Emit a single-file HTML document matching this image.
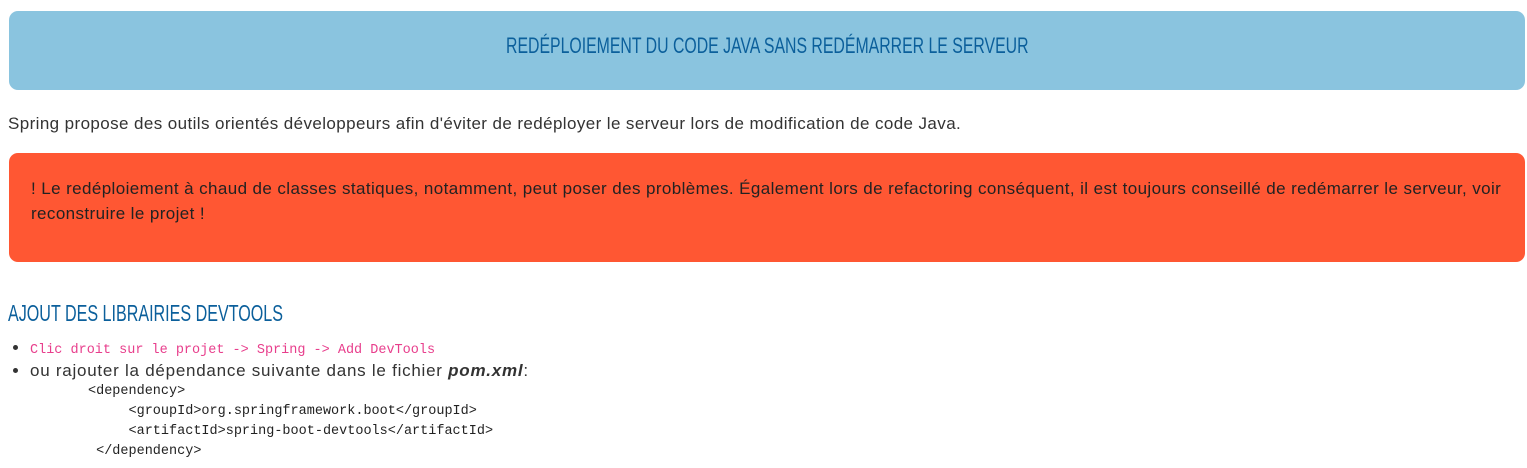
<!DOCTYPE html>
<html><head><meta charset="utf-8"><style>
body{margin:0;background:#fff;font-family:"Liberation Sans",Arial,sans-serif;color:#333;width:1527px;height:468px;overflow:hidden;position:relative}
.hdr{position:absolute;left:9px;top:11px;width:1516px;height:79px;background:#8ac4df;border-radius:9px}
.t{position:absolute;white-space:nowrap;color:#0b5f9b;transform-origin:0 0}
.p{position:absolute;left:8px;top:114px;font-size:17px;letter-spacing:0.4px;white-space:nowrap}
.warn{position:absolute;left:9px;top:153px;width:1516px;height:109px;background:#ff5733;border-radius:9px}
.warn div{position:absolute;left:22px;top:23px;right:20px;font-size:17px;letter-spacing:0.4px;line-height:25px;color:#222}
ul{position:absolute;left:8px;top:337px;margin:0;padding-left:22px;font-size:17px;letter-spacing:0.75px}
li{line-height:22px}
li.b{margin-top:-2px}
code{font-family:"Liberation Mono",monospace;font-size:13.5px;letter-spacing:0;color:#e83e8c}
pre{position:absolute;margin:0;font-family:"Liberation Mono",monospace;font-size:13.5px;line-height:20px;color:#222;left:88px;top:382px}
</style></head><body>
<div class="hdr"></div>
<div class="t" style="left:506px;top:33px;font-size:22px;transform:scaleX(0.72)">REDÉPLOIEMENT DU CODE JAVA SANS REDÉMARRER LE SERVEUR</div>
<div class="p">Spring propose des outils orientés développeurs afin d'éviter de redéployer le serveur lors de modification de code Java.</div>
<div class="warn"><div>! Le redéploiement à chaud de classes statiques, notamment, peut poser des problèmes. Également lors de refactoring conséquent, il est toujours conseillé de redémarrer le serveur, voir reconstruire le projet !</div></div>
<div class="t" style="left:8px;top:300px;font-size:23px;transform:scaleX(0.70)">AJOUT DES LIBRAIRIES DEVTOOLS</div>
<ul><li><code>Clic droit sur le projet -&gt; Spring -&gt; Add DevTools</code></li>
<li class="b">ou rajouter la dépendance suivante dans le fichier <b><i>pom.xml</i></b>:</li></ul>
<pre>&lt;dependency&gt;
     &lt;groupId&gt;org.springframework.boot&lt;/groupId&gt;
     &lt;artifactId&gt;spring-boot-devtools&lt;/artifactId&gt;
 &lt;/dependency&gt;</pre>
</body></html>
